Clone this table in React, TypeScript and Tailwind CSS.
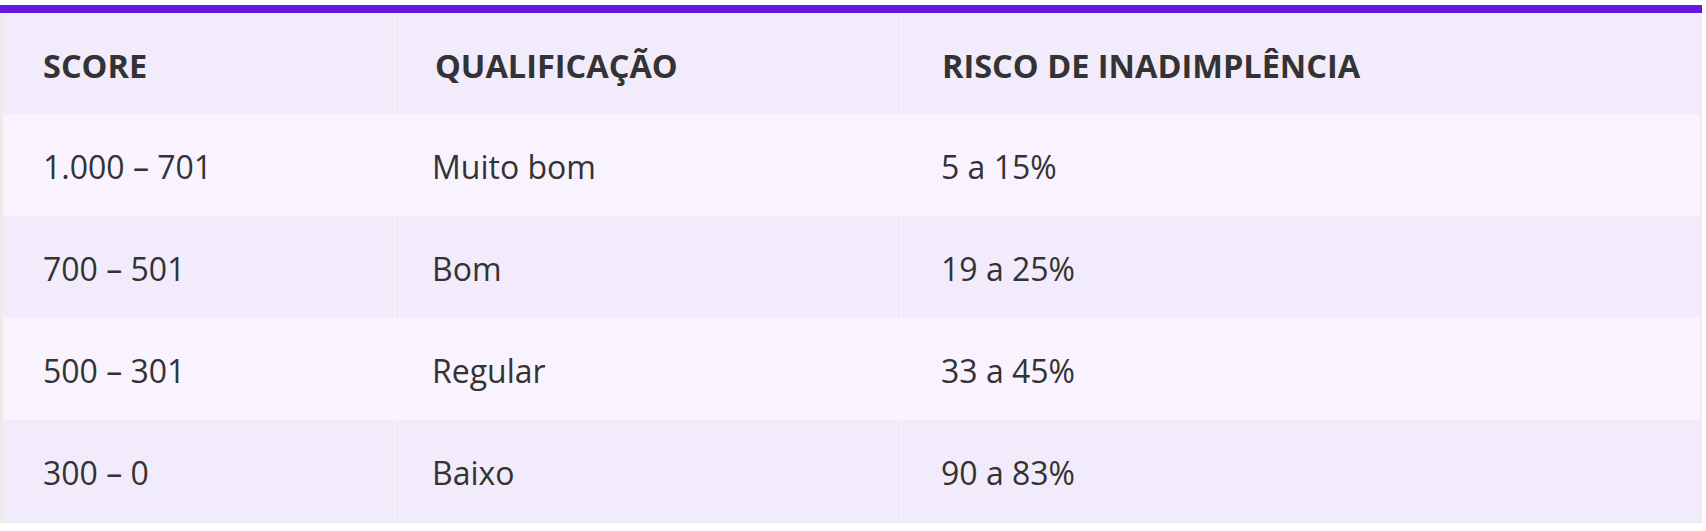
import React from "react";

const rows = [
  { score: "1.000 – 701", qual: "Muito bom", risco: "5 a 15%" },
  { score: "700 – 501", qual: "Bom", risco: "19 a 25%" },
  { score: "500 – 301", qual: "Regular", risco: "33 a 45%" },
  { score: "300 – 0", qual: "Baixo", risco: "90 a 83%" },
];

export default function App() {
  return (
    <div className="min-h-[531px] w-full bg-white pt-[5px] font-['Open_Sans','Noto_Sans',sans-serif] text-[#333]">
      <table className="w-[1702px] table-fixed border-collapse border-l-[3px] border-r-[2px] border-b-[2px] border-[#ececec] text-[32px]">
        <colgroup>
          <col className="w-[393px]" />
          <col className="w-[507px]" />
          <col />
        </colgroup>
        <thead>
          <tr className="h-[105px] bg-[#f2ebfb]">
            {["SCORE", "QUALIFICAÇÃO", "RISCO DE INADIMPLÊNCIA"].map((h) => (
              <th
                key={h}
                className="border-t-[8px] border-r border-t-[#6519e0] border-r-white/50 pl-[40px] pt-[5px] text-left align-middle text-[32.5px] font-bold last:border-r-0"
              >
                {h}
              </th>
            ))}
          </tr>
        </thead>
        <tbody>
          {rows.map((r, i) => (
            <tr key={r.score} className={i % 2 === 0 ? "h-[102px] bg-[#f8f3fe]" : "h-[102px] bg-[#f2ebfb]"}>
              <td className="border-r border-white/50 pl-[40px] pt-[4px] align-middle">{r.score}</td>
              <td className="border-r border-white/50 pl-[37px] pt-[4px] align-middle">{r.qual}</td>
              <td className="pl-[39px] pt-[4px] align-middle">{r.risco}</td>
            </tr>
          ))}
        </tbody>
      </table>
    </div>
  );
}
